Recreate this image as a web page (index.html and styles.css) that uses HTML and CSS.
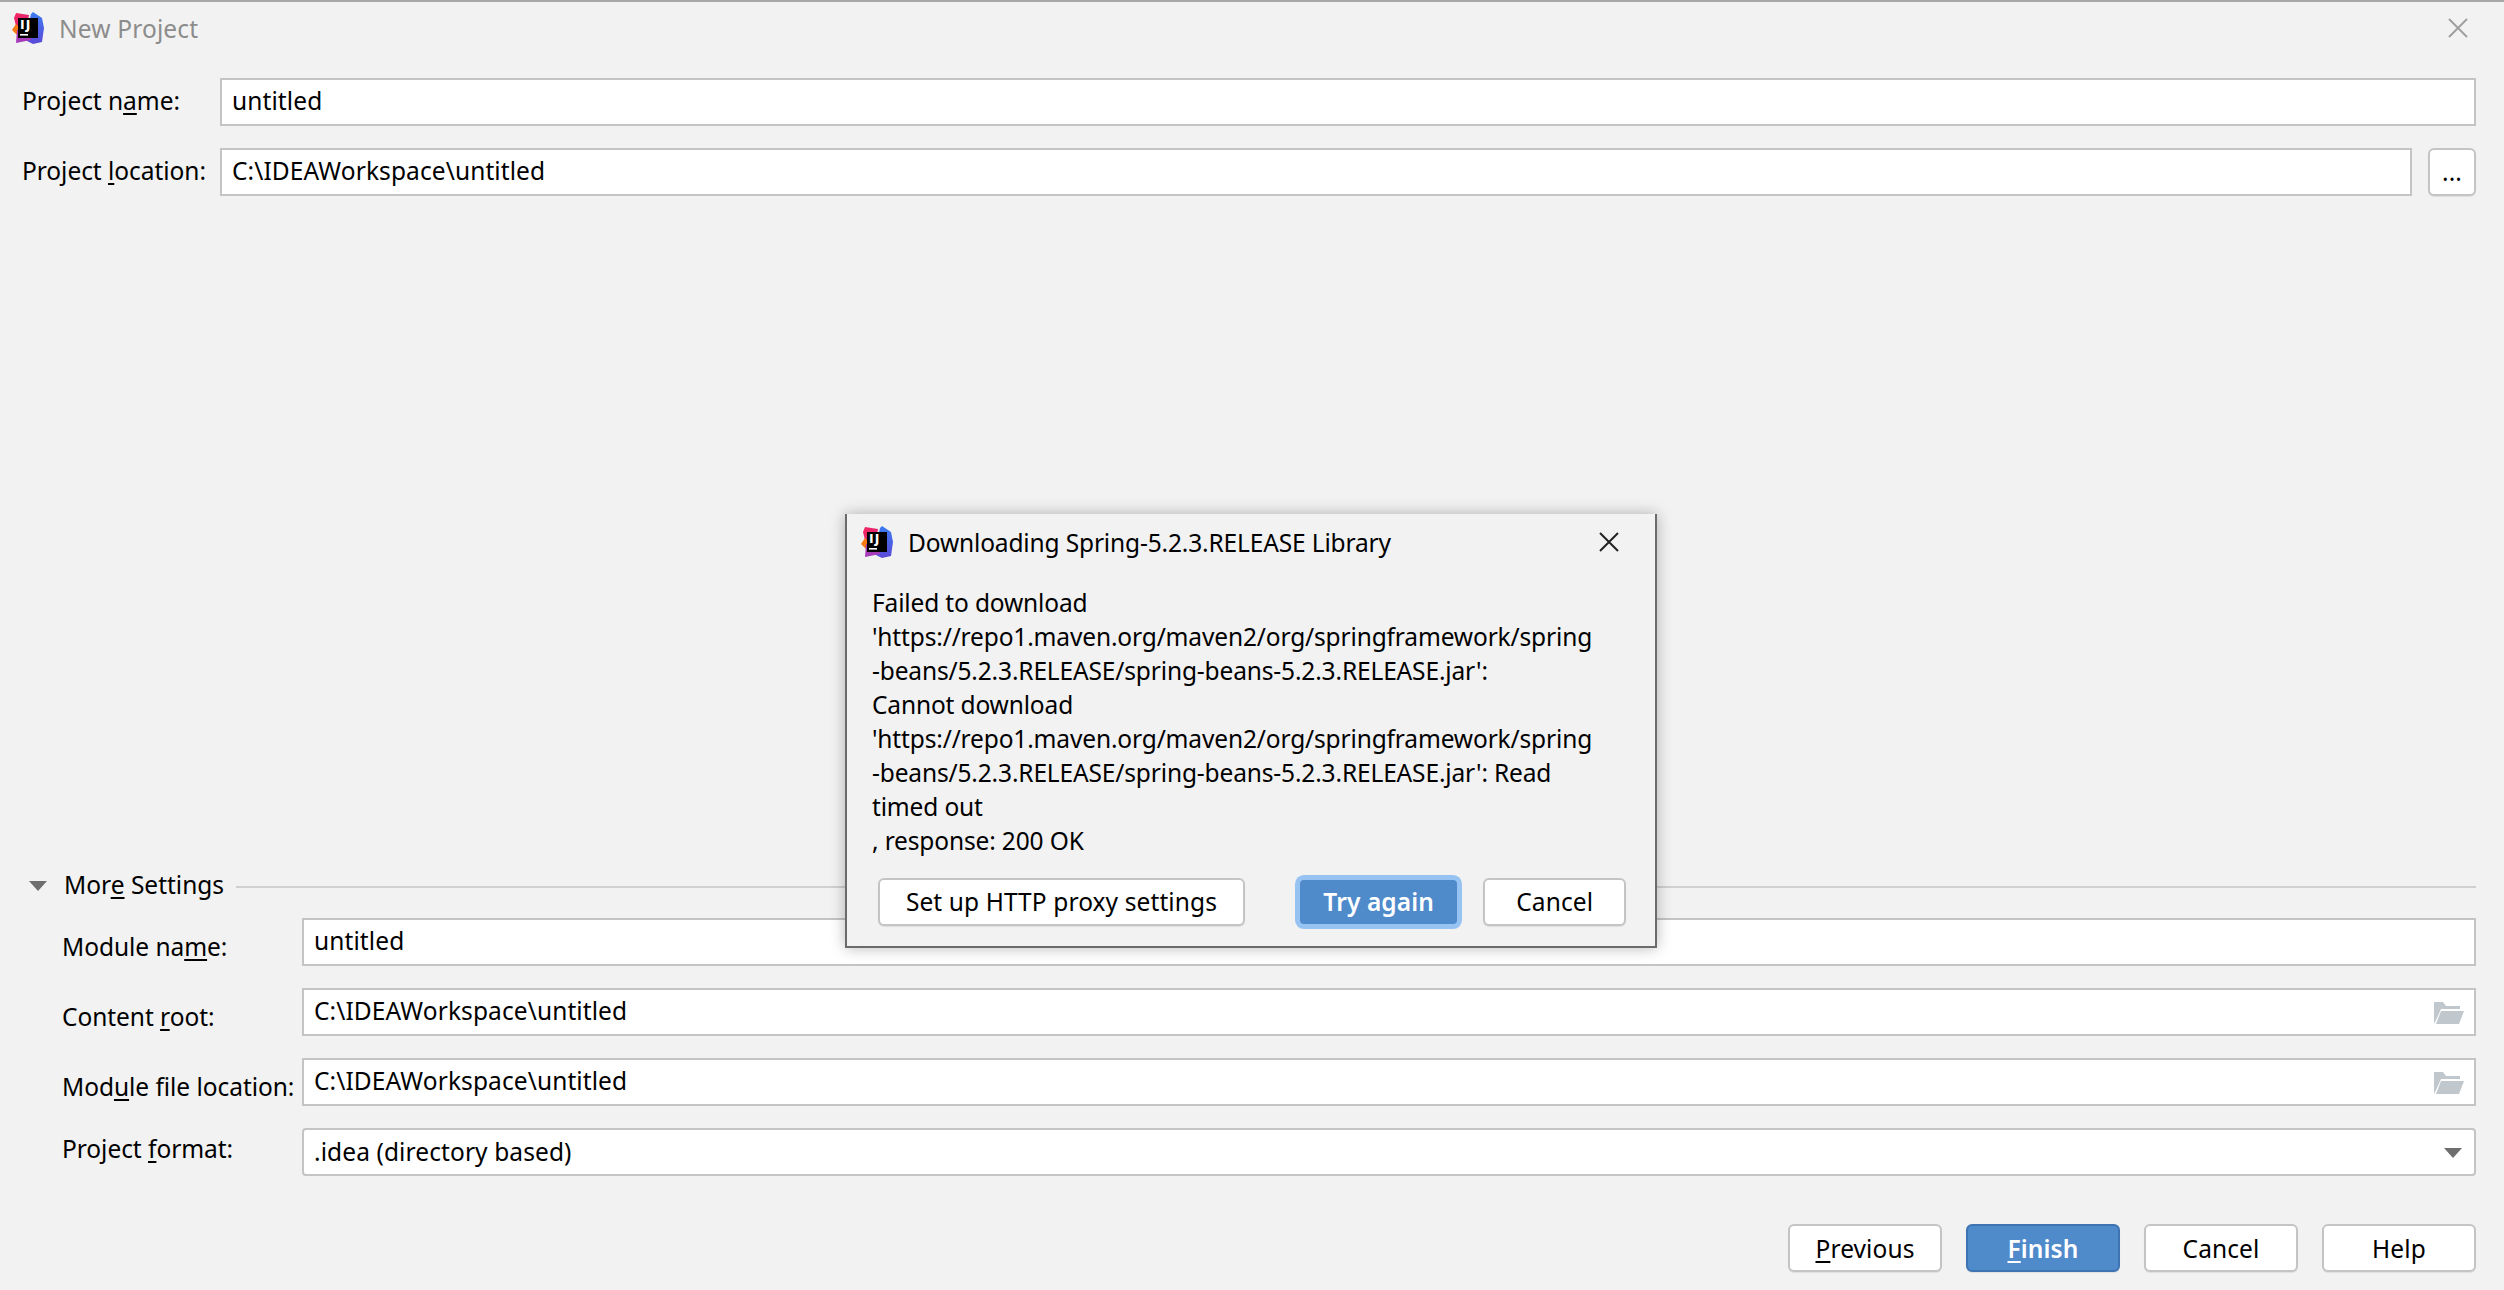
FILE: index.html
```html
<!DOCTYPE html>
<html lang="en">
<head>
<meta charset="utf-8">
<title>New Project</title>
<link rel="stylesheet" href="styles.css">
</head>
<body>
<svg class="defs" width="0" height="0" aria-hidden="true">
  <defs>
    <linearGradient id="ijBlue" x1="0" y1="0" x2="0" y2="1"><stop offset="0" stop-color="#3b7cf0"/><stop offset="1" stop-color="#5a49d8"/></linearGradient>
    <linearGradient id="ijPink" x1="0" y1="0" x2="1" y2="1"><stop offset="0" stop-color="#f5265f"/><stop offset="1" stop-color="#d9257f"/></linearGradient>
    <symbol id="logo" viewBox="0 0 32 32">
      <path d="M21 0l9 6 2 10-2 14-9 2-8-4 6-26z" fill="url(#ijBlue)"/>
      <path d="M4 1l13 2-3 15H5L2 6z" fill="url(#ijPink)"/>
      <path d="M4 12L0 18l5 5 4-6z" fill="#f97a12"/>
      <path d="M5 18h14v10L4 31z" fill="#a63cb8"/>
      <rect x="6" y="6" width="20" height="20" fill="#000"/>
      <text x="8" y="17" class="logo-text">IJ</text>
      <rect x="8" y="22" width="8" height="1.6" fill="#fff"/>
    </symbol>
    <symbol id="folder" viewBox="0 0 30 22">
      <path d="M0 0h9l3 4h14v3H7l-4 9-3 6z" fill="#c0c8cd"/>
      <path d="M7 9h23l-5 13H2z" fill="#c0c8cd"/>
    </symbol>
  </defs>
</svg>

<div class="dialog">
  <header class="titlebar">
    <svg class="logo"><use href="#logo"/></svg>
    <span class="title">New Project</span>
    <svg class="close close-muted" viewBox="0 0 20 20"><path d="M1 1l18 18M19 1L1 19"/></svg>
  </header>

  <section class="top-form">
    <div class="row">
      <label class="label">Project n<u>a</u>me:</label>
      <div class="field">untitled</div>
    </div>
    <div class="row">
      <label class="label">Project <u>l</u>ocation:</label>
      <div class="field">C:\IDEAWorkspace\untitled</div>
      <button class="btn btn-dots">...</button>
    </div>
  </section>

  <div class="spacer"></div>

  <section class="more">
    <div class="more-head">
      <svg class="tri tri-more" viewBox="0 0 18 10"><path d="M0 0h18l-9 10z"/></svg>
      <span class="more-title">Mor<u>e</u> Settings</span>
      <span class="more-line"></span>
    </div>
    <div class="more-form">
      <div class="row">
        <label class="label label-low">Module na<u>m</u>e:</label>
        <div class="field">untitled</div>
      </div>
      <div class="row">
        <label class="label label-low">Content <u>r</u>oot:</label>
        <div class="field field-icon">C:\IDEAWorkspace\untitled<svg class="folder"><use href="#folder"/></svg></div>
      </div>
      <div class="row">
        <label class="label label-low">Mod<u>u</u>le file location:</label>
        <div class="field field-icon">C:\IDEAWorkspace\untitled<svg class="folder"><use href="#folder"/></svg></div>
      </div>
      <div class="row">
        <label class="label label-high">Project <u>f</u>ormat:</label>
        <div class="field field-select">.idea (directory based)<svg class="tri tri-select" viewBox="0 0 18 10"><path d="M0 0h18l-9 10z"/></svg></div>
      </div>
    </div>
  </section>

  <footer class="footer">
    <button class="btn btn-foot"><u>P</u>revious</button>
    <button class="btn btn-foot btn-primary"><u>F</u>inish</button>
    <button class="btn btn-foot">Cancel</button>
    <button class="btn btn-foot">Help</button>
  </footer>
</div>

<div class="modal">
  <div class="modal-head">
    <svg class="logo"><use href="#logo"/></svg>
    <span class="modal-title">Downloading Spring-5.2.3.RELEASE Library</span>
    <svg class="close close-dark" viewBox="0 0 20 20"><path d="M1 1l18 18M19 1L1 19"/></svg>
  </div>
  <div class="modal-body">
    <div>Failed to download</div>
    <div>'https://repo1.maven.org/maven2/org/springframework/spring</div>
    <div>-beans/5.2.3.RELEASE/spring-beans-5.2.3.RELEASE.jar':</div>
    <div>Cannot download</div>
    <div>'https://repo1.maven.org/maven2/org/springframework/spring</div>
    <div>-beans/5.2.3.RELEASE/spring-beans-5.2.3.RELEASE.jar': Read</div>
    <div>timed out</div>
    <div>, response: 200 OK</div>
  </div>
  <div class="modal-actions">
    <button class="btn btn-proxy">Set up HTTP proxy settings</button>
    <button class="btn btn-try">Try again</button>
    <button class="btn btn-cancel">Cancel</button>
  </div>
</div>
</body>
</html>
```

FILE: styles.css
```css
* { box-sizing: border-box; }
html, body { margin: 0; height: 1290px; overflow: hidden; }
body {
  position: relative;
  background: #f2f2f2;
  color: #000;
  font-family: "Noto Sans", "Open Sans", sans-serif;
  font-size: 24.5px;
  letter-spacing: -0.15px;
}
u { text-decoration-thickness: 2px; text-underline-offset: 3px; }
.defs { position: absolute; }
.logo-text { font: 700 12.5px "DejaVu Sans", sans-serif; fill: #fff; letter-spacing: 1px; }

.dialog {
  display: flex;
  flex-direction: column;
  height: 1290px;
  border-top: 2px solid #a8a8a8;
  padding: 0 28px 18px 22px;
}
.titlebar {
  display: flex;
  align-items: center;
  height: 56px;
  margin: 0 8px 0 -10px;
  padding-bottom: 4px;
}
.logo { width: 32px; height: 32px; flex: none; }
.title { margin-left: 15px; color: #8c8c8c; letter-spacing: 0.15px; }
.close { width: 20px; height: 20px; margin-left: auto; fill: none; stroke-width: 2; }
.close-muted { stroke: #a0a0a0; }
.close-dark { stroke: #222; }

.top-form { display: grid; gap: 22px; margin-top: 20px; }
.row { display: flex; align-items: center; height: 48px; }
.label { white-space: nowrap; letter-spacing: -0.05px; }
.top-form .label { width: 198px; flex: none; padding-bottom: 4px; }
.more-form .label { width: 239px; flex: none; margin-left: -1px; margin-right: 1px; }
.label-low { padding-top: 8px; }
.label-high { padding-bottom: 8px; }

.field {
  position: relative;
  flex: 1;
  display: flex;
  align-items: center;
  height: 48px;
  padding: 0 10px 4px;
  background: #fff;
  border: 2px solid #c4c4c4;
  white-space: nowrap;
  letter-spacing: 0.1px;
}
.field-select { border-radius: 4px; padding-bottom: 2px; }
.folder { position: absolute; right: 10px; top: 12px; width: 30px; height: 22px; }
.tri { fill: #6e6e6e; }
.tri-select { position: absolute; right: 12px; top: 18px; width: 18px; height: 10px; }

.spacer { flex: 1; }

.more { padding-left: 7px; }
.more-head { display: flex; align-items: center; height: 34px; }
.tri-more { width: 18px; height: 10px; flex: none; margin-top: -2px; }
.more-title { margin-left: 17px; padding-bottom: 5px; letter-spacing: 0; }
.more-line { flex: 1; height: 2px; margin-left: 12px; background: #d0d0d0; }
.more-form { display: grid; gap: 22px; margin-top: 14px; padding-left: 34px; }

.btn {
  display: flex;
  align-items: center;
  justify-content: center;
  height: 48px;
  padding: 0;
  font: inherit;
  letter-spacing: 0.1px;
  color: #000;
  background: #fff;
  border: 2px solid #c4c4c4;
  border-radius: 6px;
  box-shadow: 0 1px 1px rgba(0, 0, 0, .08);
}
.btn-dots { width: 48px; margin-left: 16px; flex: none; padding-bottom: 2px; }
.footer { display: flex; justify-content: flex-end; gap: 24px; margin-top: 48px; }
.btn-foot { width: 154px; }
.btn-primary {
  color: #fff;
  font-weight: 600;
  background: #4f8acb;
  border-color: #3f74b2;
}

.modal {
  position: absolute;
  left: 845px;
  top: 514px;
  width: 812px;
  height: 434px;
  display: flex;
  flex-direction: column;
  background: #f2f2f2;
  border: 2px solid #6b6b6b;
  border-top: 0;
  box-shadow: 0 0 14px rgba(0, 0, 0, .28);
}
.modal-head { display: flex; align-items: center; height: 52px; margin-top: 2px; padding: 0 36px 0 14px; flex: none; }
.modal-title { margin-left: 15px; }
.modal-body { padding: 18px 20px 0 25px; line-height: 34px; white-space: nowrap; }
.modal-actions { display: flex; align-items: center; padding: 20px 29px 0 31px; }
.btn-proxy { width: 368px; padding-bottom: 2px; }
.btn-try {
  width: 158px;
  height: 44px;
  margin-left: 55px;
  padding-bottom: 2px;
  color: #fff;
  font-weight: 600;
  background: #4f8acb;
  border: 0;
  border-radius: 4px;
  box-shadow: 0 0 0 5px #97c3f3;
}
.btn-cancel { width: 143px; margin-left: 26px; padding-bottom: 2px; }
```
